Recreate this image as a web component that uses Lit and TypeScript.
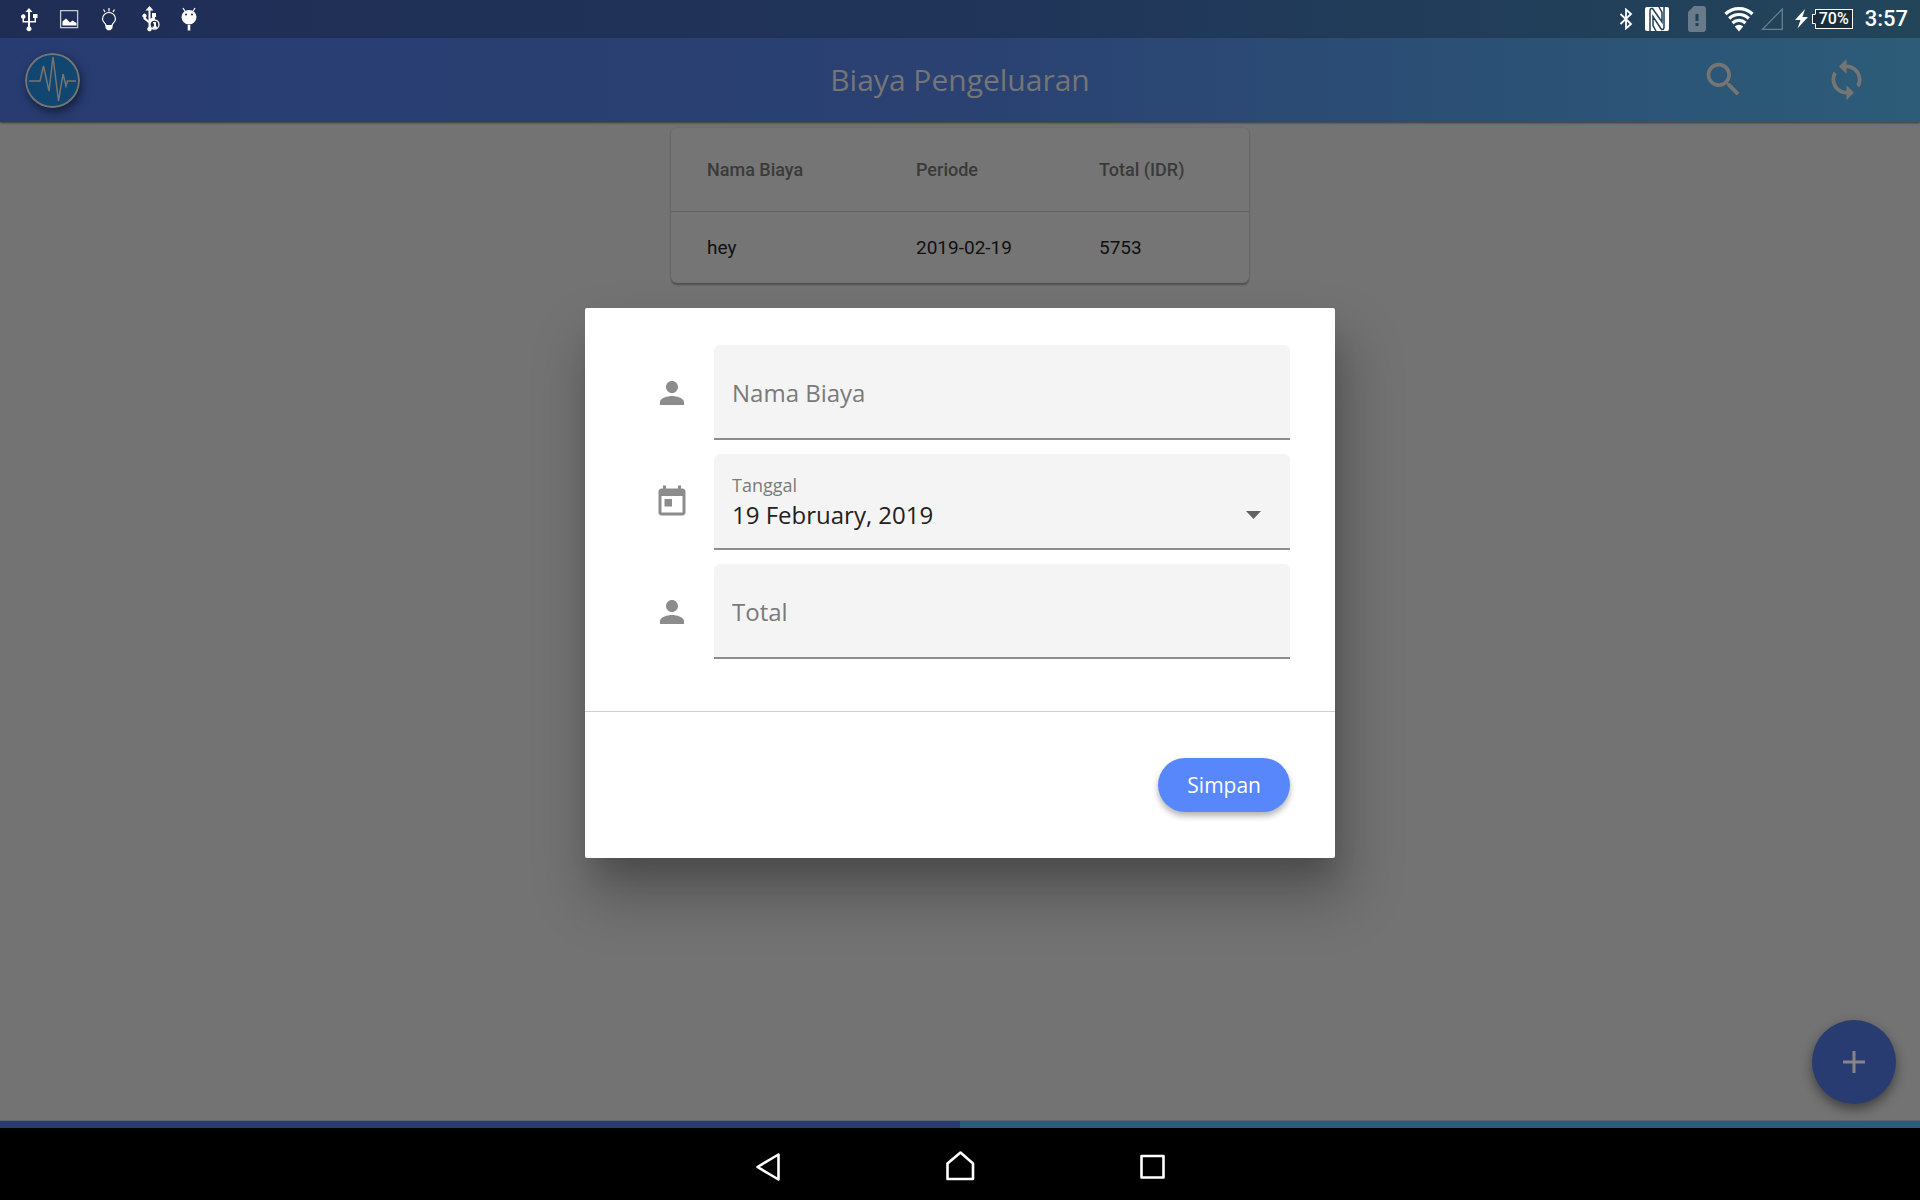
import { LitElement, html, css, svg } from "lit";
import { customElement } from "lit/decorators.js";

interface Expense {
  name: string;
  period: string;
  total: number;
}

const expenses: Expense[] = [{ name: "hey", period: "2019-02-19", total: 5753 }];

const person = html`<svg class="field-icon" viewBox="0 0 24 24" aria-hidden="true">
  <path d="M12 12c2.21 0 4-1.79 4-4s-1.79-4-4-4-4 1.79-4 4 1.79 4 4 4zm0 2c-2.67 0-8 1.34-8 4v2h16v-2c0-2.66-5.33-4-8-4z" />
</svg>`;

const calendar = html`<svg class="field-icon" viewBox="0 0 24 24" aria-hidden="true">
  <path d="M19 3h-1V1h-2v2H8V1H6v2H5c-1.11 0-2 .9-2 2v14c0 1.1.89 2 2 2h14c1.1 0 2-.9 2-2V5c0-1.1-.9-2-2-2zm0 16H5V8h14v11zM7 10h5v5H7z" />
</svg>`;

@customElement("status-bar")
export class StatusBar extends LitElement {
  static styles = css`
    :host {
      display: flex;
      align-items: center;
      justify-content: space-between;
      height: 38px;
      padding: 0 12px;
      background: linear-gradient(90deg, #1f2d55 0%, #203459 50%, #22455a 100%);
      color: #fff;
      font-family: Roboto, sans-serif;
    }
    .group {
      display: flex;
      align-items: center;
    }
    .left {
      gap: 8px;
    }
    svg {
      display: block;
      flex: none;
      fill: #fff;
    }
    .nfc { margin-left: 12px; }
    .sim { margin-left: 19px; }
    .wifi { margin-left: 18px; }
    .signal { margin-left: 7px; }
    .bolt { margin-left: 12px; }
    .battery {
      box-sizing: border-box;
      position: relative;
      height: 20px;
      width: 38px;
      margin-left: 7px;
      border: 1px solid #fff;
      background: #172d3d;
      font-size: 16px;
      line-height: 18px;
      font-weight: 500;
      text-align: center;
    }
    .battery::before {
      content: "";
      position: absolute;
      box-sizing: border-box;
      left: -4px;
      top: 4px;
      width: 4px;
      height: 10px;
      border: 1px solid #fff;
      border-right-color: #172d3d;
      background: #172d3d;
    }
    .clock {
      margin-left: 12px;
      font-size: 22px;
      line-height: 38px;
      font-weight: 500;
    }
  `;

  render() {
    return html`
      <div class="group left">
        <svg width="32" height="38" viewBox="0 0 32 38">
          <path d="M17 8l3.500 4H18v9h4.500v-3H21v-4h4.500v4H24v4.500H18V26.500a2.500 2.500 0 1 1-2 0V22.500H10.500V18.700A2.300 2.300 0 1 1 12 18.700V21h4v-9h-2.500z" />
        </svg>
        <svg width="32" height="38" viewBox="0 0 32 38">
          <path fill="none" stroke="#c4c9d6" stroke-width="1.300" d="M8.600 10.600h17v17h-17z" />
          <path d="M10.500 25.500v-4l3.500-3 4 4 2.500-2 4 2.500v2.500z" />
        </svg>
        <svg width="32" height="38" viewBox="0 0 32 38">
          <path fill="none" stroke="#fff" stroke-width="1.200" d="M14 25.500c0-2.500-3.500-3-3.500-6.500a6.500 6.500 0 0 1 13 0c0 3.500-3.500 4-3.500 6.500zM11.500 9.500l1.500 2.500M17 8v3.500M22.500 9.500L21 12" />
          <path d="M13.500 25h7v3l-2 2.300h-3l-2-2.300z" />
        </svg>
        <svg width="32" height="38" viewBox="0 0 32 38">
          <path d="M17.500 6l4 4.500h-3V19l2.500-2.500V17h-1v-4h4v4h-1v3l-4.500 4v3a2.300 2.300 0 1 1-2 0v-4l-5-4v-1.500a2 2 0 1 1 2 0l3 3V10.500h-3z" />
          <circle cx="22.500" cy="24.500" r="4.500" fill="#1f2d55" stroke="#fff" stroke-width="1.300" />
          <path d="M21 22h3v4.500h1V28h-4.500v-1.500H22v-3h-1z" />
        </svg>
        <svg width="32" height="38" viewBox="0 0 32 38">
          <path fill="none" stroke="#fff" stroke-width="1.200" d="M11 8l2.500 4M23 8l-2.500 4" />
          <path d="M9.500 17a7.500 7 0 0 1 15 0 7.500 7.500 0 0 1-15 0zM15.700 25h2.600v5.500h-2.600z" />
          <circle cx="14" cy="14.500" r="1" fill="#1f2d55" />
          <circle cx="20" cy="14.500" r="1" fill="#1f2d55" />
        </svg>
      </div>
      <div class="group">
        <svg width="14" height="22" viewBox="0 0 14 22">
          <path fill="none" stroke="#fff" stroke-width="1.800" d="M1.500 6l10.500 10-5 4.500v-19L12 6 1.500 16" />
        </svg>
        <svg class="nfc" width="24" height="24" viewBox="0 0 24 24">
          <rect width="24" height="24" rx="2" />
          <path fill="none" stroke="#22405a" stroke-width="1.500" d="M5 24V4Q5 1 7.500 1.500L17 15V5.500L14 0M19 0V20Q19 23 16.500 22.500L8 9.500V18.500L11 24" />
        </svg>
        <svg class="sim" width="18" height="26" viewBox="0 0 18 26">
          <path fill="#697b8b" fill-rule="evenodd" d="M6 0h9q3 0 3 3v20q0 3-3 3H3q-3 0-3-3V6zM7.500 8v7h3V8zm0 9v3h3v-3z" />
        </svg>
        <svg class="wifi" width="30" height="26" viewBox="6 0 30 26">
          <g fill="none" stroke="#fff" stroke-width="3.200">
            <path d="M7.500 8a19.500 19.500 0 0 1 27 0" />
            <path d="M11.200 12.500a14 14 0 0 1 19.600 0" />
            <path d="M14.500 17a9.500 9.500 0 0 1 13 0" />
          </g>
          <path d="M16.800 20.500a6 6 0 0 1 8.400 0L21 25.500z" />
        </svg>
        <svg class="signal" width="22" height="24" viewBox="0 0 22 24">
          <path fill="none" stroke="#697f8e" stroke-width="1.300" d="M21.300 2v20.300H1.500z" />
        </svg>
        <svg class="bolt" width="13" height="20" viewBox="0 0 13 20">
          <path d="M10 0L0 11h5.500L2.500 19.500 13 8H7.500z" />
        </svg>
        <span class="battery">70%</span>
        <span class="clock">3:57</span>
      </div>
    `;
  }
}

@customElement("app-header")
export class AppHeader extends LitElement {
  static styles = css`
    :host {
      display: grid;
      grid-template-columns: 1fr auto 1fr;
      align-items: center;
      height: 84px;
      padding: 0 25px;
      background: linear-gradient(90deg, #283c72 0%, #2a4172 50%, #2c5c78 100%);
      box-shadow: 0 1px 2px #3a3a3a;
      color: #757575;
      font-family: "Open Sans", sans-serif;
    }
    .title {
      margin: 0;
      font-size: 30px;
      line-height: 40px;
      font-weight: 400;
    }
    .logo {
      display: block;
      width: 55px;
      height: 55px;
      border-radius: 50%;
      box-shadow: 2px 4px 10px rgba(0, 0, 0, 0.5);
    }
    .actions {
      display: flex;
      justify-content: flex-end;
      gap: 78px;
      padding: 0 26px 2px 0;
    }
    button {
      padding: 0;
      border: 0;
      background: none;
      color: inherit;
    }
    button svg {
      display: block;
      fill: currentColor;
    }
  `;

  render() {
    return html`
      <svg class="logo" viewBox="0 0 55 55" aria-hidden="true">
        <circle cx="27.500" cy="27.500" r="26.500" fill="#10466f" stroke="#757575" stroke-width="2" />
        <path fill="none" stroke="#757575" stroke-width="1.500" d="M4 28h11l3.500-15 5.500 25 4-34 5.500 44L38 21l3 12 1.500-5H51" />
      </svg>
      <h1 class="title">Biaya Pengeluaran</h1>
      <div class="actions">
        <button aria-label="Cari">
          <svg width="45" height="45" viewBox="0 0 24 24">
            <path d="M15.500 14h-.79l-.28-.27C15.410 12.590 16 11.110 16 9.500 16 5.910 13.090 3 9.500 3S3 5.910 3 9.500 5.910 16 9.500 16c1.610 0 3.090-.59 4.230-1.570l.27.28v.79l5 4.990L20.490 19l-4.990-5zm-6 0C7.010 14 5 11.990 5 9.500S7.010 5 9.500 5 14 7.010 14 9.500 11.990 14 9.500 14z" />
          </svg>
        </button>
        <button aria-label="Muat ulang">
          <svg width="45" height="45" viewBox="0 0 24 24">
            <path d="M12 4V1L8 5l4 4V6c3.310 0 6 2.690 6 6 0 1.010-.25 1.970-.7 2.800l1.460 1.460C19.540 15.030 20 13.570 20 12c0-4.420-3.580-8-8-8zm0 14c-3.310 0-6-2.690-6-6 0-1.010.25-1.970.7-2.800L5.240 7.740C4.460 8.970 4 10.430 4 12c0 4.420 3.580 8 8 8v3l4-4-4-4v3z" />
          </svg>
        </button>
      </div>
    `;
  }
}

@customElement("expense-table")
export class ExpenseTable extends LitElement {
  static styles = css`
    :host {
      display: block;
      width: 578px;
      max-width: 100%;
      border-radius: 6px;
      background: #757575;
      box-shadow: 0 2px 2px #505050, 0 0 2px #646464;
      font-family: Roboto, sans-serif;
    }
    table {
      width: 100%;
      border-collapse: collapse;
      table-layout: fixed;
      text-align: left;
    }
    .name { width: 209px; }
    .period { width: 183px; }
    th,
    td {
      box-sizing: border-box;
      padding: 0 0 0 36px;
    }
    th {
      height: 83px;
      border-bottom: 1px solid #626262;
      color: #3a3a3a;
      font-size: 18px;
      font-weight: 500;
    }
    td {
      height: 72px;
      color: #101010;
      font-size: 19px;
    }
  `;

  render() {
    return html`
      <table>
        <thead>
          <tr>
            <th class="name" scope="col">Nama Biaya</th>
            <th class="period" scope="col">Periode</th>
            <th scope="col">Total (IDR)</th>
          </tr>
        </thead>
        <tbody>
          ${expenses.map(
            (e) => html`<tr>
              <td>${e.name}</td>
              <td>${e.period}</td>
              <td>${e.total}</td>
            </tr>`
          )}
        </tbody>
      </table>
    `;
  }
}

@customElement("expense-dialog")
export class ExpenseDialog extends LitElement {
  static styles = css`
    :host {
      position: absolute;
      inset: 0;
      display: flex;
      align-items: center;
      justify-content: center;
      font-family: "Open Sans", sans-serif;
    }
    .dialog {
      width: 750px;
      max-width: 100%;
      border-radius: 2px;
      background: #fff;
      box-shadow: 4px 20px 24px -8px rgba(0, 0, 0, 0.14), 8px 36px 56px 4px rgba(0, 0, 0, 0.26);
    }
    .fields {
      display: flex;
      flex-direction: column;
      gap: 14px;
      padding: 37px 45px 52px 69px;
    }
    .row {
      display: flex;
      align-items: center;
      gap: 24px;
    }
    .field-icon {
      flex: none;
      width: 36px;
      height: 36px;
      fill: #8c8c8c;
    }
    .field {
      box-sizing: border-box;
      display: flex;
      flex: 1;
      flex-direction: column;
      justify-content: center;
      height: 95px;
      padding: 2px 18px 0;
      border-bottom: 2px solid #8c8c8c;
      border-radius: 6px 6px 0 0;
      background: #f4f4f4;
    }
    .date {
      height: 96px;
      padding-top: 0;
    }
    input {
      width: 100%;
      padding: 0;
      border: 0;
      outline: 0;
      background: none;
      color: #212121;
      font: inherit;
      font-size: 24px;
      line-height: 32px;
    }
    input::placeholder {
      color: #7a7a7a;
      opacity: 1;
    }
    .label {
      color: #7a7a7a;
      font-size: 18px;
      line-height: 28px;
    }
    .picker {
      display: flex;
      align-items: center;
      justify-content: space-between;
      padding-right: 11px;
    }
    .arrow {
      flex: none;
      width: 15px;
      height: 8px;
      fill: #616161;
    }
    .footer {
      display: flex;
      justify-content: flex-end;
      padding: 46px 45px;
      border-top: 1px solid #cfcfcf;
    }
    .save {
      height: 54px;
      padding: 0 29px;
      border: 0;
      border-radius: 27px;
      background: #5887fb;
      box-shadow: 0 4px 6px rgba(0, 0, 0, 0.3);
      color: #fff;
      font-family: "Open Sans", sans-serif;
      font-size: 21px;
    }
  `;

  render() {
    return html`
      <form class="dialog" role="dialog" aria-label="Biaya" @submit=${(e: Event) => e.preventDefault()}>
        <div class="fields">
          <div class="row">
            ${person}
            <div class="field"><input type="text" placeholder="Nama Biaya" aria-label="Nama Biaya" /></div>
          </div>
          <div class="row">
            ${calendar}
            <div class="field date">
              <label class="label" for="date">Tanggal</label>
              <div class="picker">
                <input id="date" type="text" readonly value="19 February, 2019" />
                <svg class="arrow" viewBox="0 0 15 8" aria-hidden="true"><path d="M0 0h15L7.500 8z" /></svg>
              </div>
            </div>
          </div>
          <div class="row">
            ${person}
            <div class="field"><input type="text" placeholder="Total" aria-label="Total" /></div>
          </div>
        </div>
        <div class="footer"><button class="save" type="submit">Simpan</button></div>
      </form>
    `;
  }
}

@customElement("nav-bar")
export class NavBar extends LitElement {
  static styles = css`
    :host {
      box-sizing: border-box;
      display: flex;
      align-items: center;
      justify-content: center;
      gap: 144px;
      height: 72px;
      padding-top: 4px;
      background: #000;
    }
    button {
      padding: 0;
      border: 0;
      background: none;
    }
    svg {
      display: block;
      fill: none;
      stroke: #fff;
      stroke-width: 2.6;
      stroke-linejoin: round;
    }
  `;

  render() {
    const shapes = [
      { label: "Kembali", shape: svg`<path d="M34.500 13.500v25L13.500 26z" />` },
      { label: "Beranda", shape: svg`<path d="M11.500 38V22.500L24.500 11.500l12.500 11V38z" />` },
      { label: "Terkini", shape: svg`<path d="M13.500 15h22v21.500h-22z" />` },
    ];
    return shapes.map(
      (s) => html`<button aria-label=${s.label}>
        <svg width="48" height="50" viewBox="0 0 48 50">${s.shape}</svg>
      </button>`
    );
  }
}

@customElement("app-root")
export class AppRoot extends LitElement {
  static styles = css`
    :host {
      position: relative;
      display: flex;
      flex-direction: column;
      min-height: 100vh;
      overflow: hidden;
      background: #737373;
    }
    .content {
      display: flex;
      flex: 1;
      flex-direction: column;
      align-items: center;
      padding-top: 6px;
    }
    .overlay {
      position: absolute;
      inset: 38px 0 72px;
    }
    .fab {
      position: absolute;
      right: 24px;
      bottom: 96px;
      display: flex;
      align-items: center;
      justify-content: center;
      width: 84px;
      height: 84px;
      padding: 0;
      border: 0;
      border-radius: 50%;
      background: #283c72;
      box-shadow: 0 5px 12px rgba(0, 0, 0, 0.45);
    }
    .tabs {
      display: flex;
      height: 7px;
      border-top: 1px solid #5a6670;
    }
    .tab {
      flex: 1;
      background: #2c5c78;
    }
    .active {
      background: #283c72;
    }
  `;

  render() {
    return html`
      <status-bar></status-bar>
      <app-header></app-header>
      <main class="content"><expense-table></expense-table></main>
      <div class="tabs"><div class="tab active"></div><div class="tab"></div></div>
      <nav-bar></nav-bar>
      <div class="overlay"><expense-dialog></expense-dialog></div>
      <button class="fab" aria-label="Tambah">
        <svg width="22" height="22" viewBox="0 0 22 22"><path stroke="#858585" stroke-width="3" d="M11 0v22M0 11h22" /></svg>
      </button>
    `;
  }
}
